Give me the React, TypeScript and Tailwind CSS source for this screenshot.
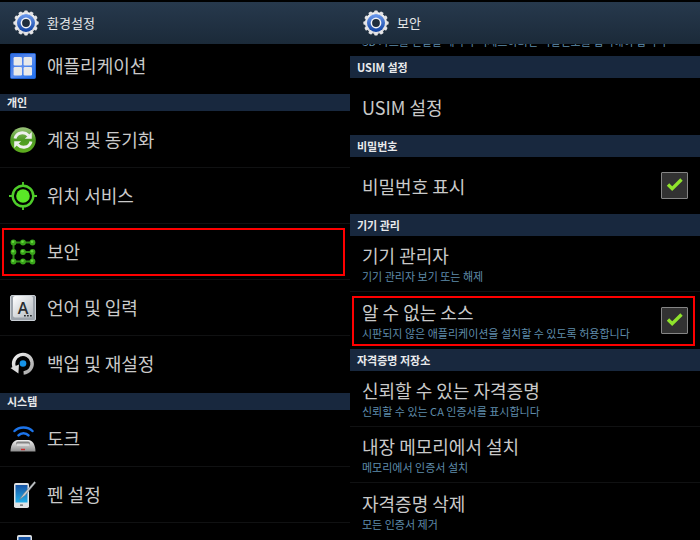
import type { ReactNode } from 'react';

const GearIcon = () => (
  <svg className="size-[26px] shrink-0" viewBox="0 0 26 26" aria-hidden="true">
    <defs>
      <linearGradient id="gearBody" x1="0" y1="0" x2="0" y2="1">
        <stop offset="0" stopColor="#ffffff" />
        <stop offset="1" stopColor="#c9c9cd" />
      </linearGradient>
      <linearGradient id="gearRing" x1="0" y1="0" x2="0" y2="1">
        <stop offset="0" stopColor="#6d9bf0" />
        <stop offset="1" stopColor="#0d409f" />
      </linearGradient>
    </defs>
    <circle cx="13" cy="13" r="11" fill="url(#gearBody)" />
    {[0, 30, 60, 90, 120, 150].map((angle) => (
      <rect
        key={angle}
        x="11.2"
        y="0.4"
        width="3.6"
        height="25.2"
        rx="1"
        fill="#e4e4e6"
        transform={`rotate(${angle} 13 13)`}
      />
    ))}
    <circle cx="13" cy="13" r="9" fill="url(#gearRing)" />
    <circle cx="13" cy="13" r="5.4" fill="#f2f4f8" />
    <circle cx="13" cy="13" r="3.9" fill="#1e2d3e" />
  </svg>
);

const AppsIcon = () => (
  <svg className="size-[26px]" viewBox="0 0 26 26" aria-hidden="true">
    <defs>
      <linearGradient id="appsBg" x1="0" y1="0" x2="1" y2="1">
        <stop offset="0" stopColor="#2f6be0" />
        <stop offset="0.5" stopColor="#5b8df0" />
        <stop offset="1" stopColor="#1b6ff0" />
      </linearGradient>
    </defs>
    <rect x="0.5" y="0.5" width="25" height="25" rx="1" fill="url(#appsBg)" stroke="#2160cc" />
    <g fill="#e8e9ea">
      <rect x="3.6" y="4" width="8.400" height="8.400" rx="1.200" />
      <rect x="13.600" y="4" width="8.400" height="8.400" rx="1.200" />
      <rect x="3.600" y="14" width="8.400" height="8.400" rx="1.200" />
      <rect x="13.600" y="14" width="8.400" height="8.400" rx="1.200" />
    </g>
  </svg>
);

const SyncIcon = () => (
  <svg className="size-[26px]" viewBox="0 0 26 26" aria-hidden="true">
    <defs>
      <linearGradient id="syncBg" x1="0" y1="0" x2="0" y2="1">
        <stop offset="0" stopColor="#9cc47c" />
        <stop offset="0.5" stopColor="#4c9a22" />
        <stop offset="1" stopColor="#5fae1e" />
      </linearGradient>
    </defs>
    <circle cx="13" cy="13" r="12.8" fill="url(#syncBg)" />
    <g fill="none" stroke="#eef0ee" strokeWidth="3">
      <path d="M5 11.500C6.500 5 14.500 4.200 18.500 8.500" />
      <path d="M21 14.500C19.500 21 11.500 21.800 7.500 17.500" />
    </g>
    <path d="M21.800 5v6.800h-7zM4.200 21v-6.800h7z" fill="#eef0ee" />
  </svg>
);

const LocationIcon = () => (
  <svg className="size-7" viewBox="0 0 28 28" aria-hidden="true">
    <circle cx="14" cy="14" r="10.3" fill="none" stroke="#4fce2a" strokeWidth="2.4" />
    <circle cx="14" cy="14" r="6.8" fill="#5ae827" />
    <path d="M14 0v4.5M14 23.5V28M0 14h4.5M23.5 14H28" stroke="#4fce2a" strokeWidth="1.8" />
  </svg>
);

const patternDots = [3.5, 13, 22.5];

const PatternIcon = () => (
  <svg className="size-[26px]" viewBox="0 0 26 26" aria-hidden="true">
    <path d="M22.5 3.5H3.5v19h19V13H13" fill="none" stroke="#2f8a16" strokeWidth="2" />
    {patternDots.map((y) =>
      patternDots.map((x) => (
        <g key={`${x}-${y}`}>
          <circle cx={x} cy={y} r="2.9" fill="#38a31a" />
          <circle cx={x - 0.5} cy={y - 0.8} r="1.3" fill="#66d83c" />
        </g>
      ))
    )}
  </svg>
);

const LanguageIcon = () => (
  <svg className="size-[26px]" viewBox="0 0 26 26" aria-hidden="true">
    <defs>
      <linearGradient id="keyCap" x1="0" y1="0" x2="1" y2="1">
        <stop offset="0" stopColor="#ffffff" />
        <stop offset="1" stopColor="#b4bac0" />
      </linearGradient>
    </defs>
    <rect x="0.5" y="0.5" width="25" height="25" rx="1.5" fill="#9ca3ab" stroke="#c8ced4" />
    <rect x="3" y="1" width="20" height="21.500" rx="2" fill="url(#keyCap)" />
    <text x="13" y="18.500" textAnchor="middle" className="font-['Open_Sans',sans-serif] text-[16px] font-semibold" fill="#292d31">
      A
    </text>
    <path d="M14 20.800h1.800M17 20.800h1.800M20 20.800h1.800" stroke="#292d31" strokeWidth="1.6" />
  </svg>
);

const BackupIcon = () => (
  <svg className="size-[26px]" viewBox="0 0 26 26" aria-hidden="true">
    <defs>
      <linearGradient id="backupArrow" x1="0" y1="0" x2="1" y2="1">
        <stop offset="0" stopColor="#f2f2f2" />
        <stop offset="1" stopColor="#a6a6a6" />
      </linearGradient>
    </defs>
    <path d="M4.6 17A9.3 9.3 0 1 1 13.6 22" fill="none" stroke="url(#backupArrow)" strokeWidth="3.4" />
    <path d="M0.500 17 9 13.500l-.6 9z" fill="#dcdcdc" />
    <circle cx="13" cy="12.5" r="3.3" fill="#1592e6" />
  </svg>
);

const DockIcon = () => (
  <svg className="size-[26px]" viewBox="0 0 26 26" aria-hidden="true">
    <defs>
      <linearGradient id="dockBody" x1="0" y1="0" x2="0" y2="1">
        <stop offset="0" stopColor="#f1f1f1" />
        <stop offset="1" stopColor="#8f8f8f" />
      </linearGradient>
    </defs>
    <g fill="none" stroke="#1c74ea" strokeWidth="2.5" strokeLinecap="round">
      <path d="M4.500 5C9 .4 18 .4 22.500 5" />
      <path d="M8.500 9.300c2.500-2.800 7.500-2.800 10 0" />
    </g>
    <path d="M0.500 25.500c0-6.500 3-11.500 7-11.500h11c4 0 7 5 7 11.500z" fill="url(#dockBody)" />
    <rect x="6" y="15.500" width="14" height="4" rx="2" fill="#858585" />
    <rect x="6.500" y="17.500" width="13" height="2.500" rx="1" fill="#d9d9d9" />
    <path d="M11 23.500h4" stroke="#d02c2c" strokeWidth="1.400" />
  </svg>
);

const PenIcon = () => (
  <svg className="size-7" viewBox="0 0 28 28" aria-hidden="true">
    <defs>
      <linearGradient id="penScreen" x1="0" y1="0" x2="0" y2="1">
        <stop offset="0" stopColor="#1653a4" />
        <stop offset="1" stopColor="#22aee8" />
      </linearGradient>
    </defs>
    <rect x="5" y="2" width="15" height="25" rx="1.800" fill="#dfe2e4" />
    <rect x="6.500" y="4" width="12" height="17.500" fill="url(#penScreen)" />
    <rect x="11" y="23.300" width="3" height="1.800" rx=".5" fill="#7d8286" />
    <path d="m10.500 18.500 4-5.500L25.500.5l1.200 1.200L16 14.500z" fill="#c9cccf" stroke="#6f7478" strokeWidth=".5" />
  </svg>
);

const DeviceIcon = () => (
  <svg className="h-8 w-[30px]" viewBox="0 0 30 32" aria-hidden="true">
    <rect x="9" y="0" width="15" height="31" rx="1.800" fill="#dfe2e4" />
    <rect x="10.500" y="2" width="12" height="23" fill="#1653a4" />
  </svg>
);

const HighlightBox = () => (
  <span className="pointer-events-none absolute top-1 right-[5px] bottom-[3px] left-[2px] border-2 border-[#fe0000]" />
);

const Header = ({ title }: { title: string }) => (
  <header className="mt-[2px] flex h-[42px] shrink-0 items-center gap-2 bg-linear-to-b from-[#27394d] to-[#1b2a39] pl-[13px]">
    <GearIcon />
    <h1 className="text-[13px] leading-5 text-[#e4e6e8]">{title}</h1>
  </header>
);

interface MenuRowProps {
  icon: ReactNode;
  label?: string;
  divider?: boolean;
  highlighted?: boolean;
}

const MenuRow = ({ icon, label, divider = true, highlighted = false }: MenuRowProps) => (
  <li className={`relative h-14 ${divider ? 'border-b border-[#101112]' : ''}`}>
    <a href="#" className="flex h-full items-center gap-[9px] pl-2">
      <span className="grid w-[30px] shrink-0 place-items-center">{icon}</span>
      {label && <span className="pb-[2px] text-lg leading-6 text-[#c9c9c9]">{label}</span>}
    </a>
    {highlighted && <HighlightBox />}
  </li>
);

interface PreferenceProps {
  title: string;
  summary?: string;
  checkable?: boolean;
  divider?: boolean;
  highlighted?: boolean;
}

const Preference = ({ title, summary, checkable = false, divider = false, highlighted = false }: PreferenceProps) => {
  const text = (
    <span className="flex min-w-0 flex-1 flex-col whitespace-nowrap">
      <span className="text-lg leading-6 text-[#c9c9c9]">{title}</span>
      {summary && <span className="text-[11px] leading-[18px] text-[#5f8cab]">{summary}</span>}
    </span>
  );

  return (
    <li className={`relative ${divider ? 'h-14 border-b border-[#101112]' : 'h-[57px]'}`}>
      {checkable ? (
        <label className="flex h-full items-center pr-3 pl-3">
          {text}
          <span className="relative size-[27px] shrink-0">
            <input
              type="checkbox"
              defaultChecked
              className="peer block size-full appearance-none rounded-[1px] border border-[#858585] bg-[#323232]"
            />
            <svg
              className="pointer-events-none absolute inset-0 hidden size-full peer-checked:block"
              viewBox="0 0 27 27"
              aria-hidden="true"
            >
              <path d="m7 12.500 4.200 4.200L20.500 7.500" fill="none" stroke="#8fe32c" strokeWidth="3.400" />
            </svg>
          </span>
        </label>
      ) : (
        <a href="#" className="flex h-full items-center pl-3">
          {text}
        </a>
      )}
      {highlighted && <HighlightBox />}
    </li>
  );
};

const MenuSection = ({ title, children }: { title: string; children: ReactNode }) => (
  <section>
    <h2 className="flex h-[17px] items-center bg-[#18283e] pb-[2px] pl-[7px] text-[11px] leading-4 font-bold text-[#e8eaec]">
      {title}
    </h2>
    <ul className="py-px">{children}</ul>
  </section>
);

const PreferenceSection = ({ title, children }: { title: string; children: ReactNode }) => (
  <section>
    <h2 className="flex h-[22px] items-center bg-[#18283e] pl-[7px] text-[11px] leading-4 font-bold text-[#e8eaec]">
      {title}
    </h2>
    <ul>{children}</ul>
  </section>
);

export default function App() {
  return (
    <main className="grid h-screen grid-cols-2 overflow-hidden bg-black font-['Noto_Sans_CJK_KR',sans-serif]">
      <div className="flex min-w-0 flex-col overflow-hidden">
        <Header title="환경설정" />
        {/* list is scrolled a little, so its first row sits partly under the header */}
        <div className="flex h-[50px] shrink-0 flex-col justify-end overflow-hidden">
          <ul>
            <MenuRow icon={<AppsIcon />} label="애플리케이션" divider={false} />
          </ul>
        </div>
        <MenuSection title="개인">
          <MenuRow icon={<SyncIcon />} label="계정 및 동기화" />
          <MenuRow icon={<LocationIcon />} label="위치 서비스" />
          <MenuRow icon={<PatternIcon />} label="보안" highlighted />
          <MenuRow icon={<LanguageIcon />} label="언어 및 입력" />
          <MenuRow icon={<BackupIcon />} label="백업 및 재설정" divider={false} />
        </MenuSection>
        <MenuSection title="시스템">
          <MenuRow icon={<DockIcon />} label="도크" />
          <MenuRow icon={<PenIcon />} label="펜 설정" />
          <MenuRow icon={<DeviceIcon />} divider={false} />
        </MenuSection>
      </div>

      <div className="flex min-w-0 flex-col overflow-hidden">
        <Header title="보안" />
        <div className="flex h-3 shrink-0 flex-col justify-end overflow-hidden pb-[6px] pl-3">
          <p className="text-[11px] leading-[18px] whitespace-nowrap text-[#5f8cab]">
            SD 카드를 연결할 때마다 액세스하려면 비밀번호를 입력해야 합니다
          </p>
        </div>
        <PreferenceSection title="USIM 설정">
          <Preference title="USIM 설정" />
        </PreferenceSection>
        <PreferenceSection title="비밀번호">
          <Preference title="비밀번호 표시" checkable />
        </PreferenceSection>
        <PreferenceSection title="기기 관리">
          <Preference title="기기 관리자" summary="기기 관리자 보기 또는 해제" divider />
          <Preference
            title="알 수 없는 소스"
            summary="시판되지 않은 애플리케이션을 설치할 수 있도록 허용합니다"
            checkable
            highlighted
          />
        </PreferenceSection>
        <PreferenceSection title="자격증명 저장소">
          <Preference title="신뢰할 수 있는 자격증명" summary="신뢰할 수 있는 CA 인증서를 표시합니다" divider />
          <Preference title="내장 메모리에서 설치" summary="메모리에서 인증서 설치" divider />
          <Preference title="자격증명 삭제" summary="모든 인증서 제거" />
        </PreferenceSection>
      </div>
    </main>
  );
}
